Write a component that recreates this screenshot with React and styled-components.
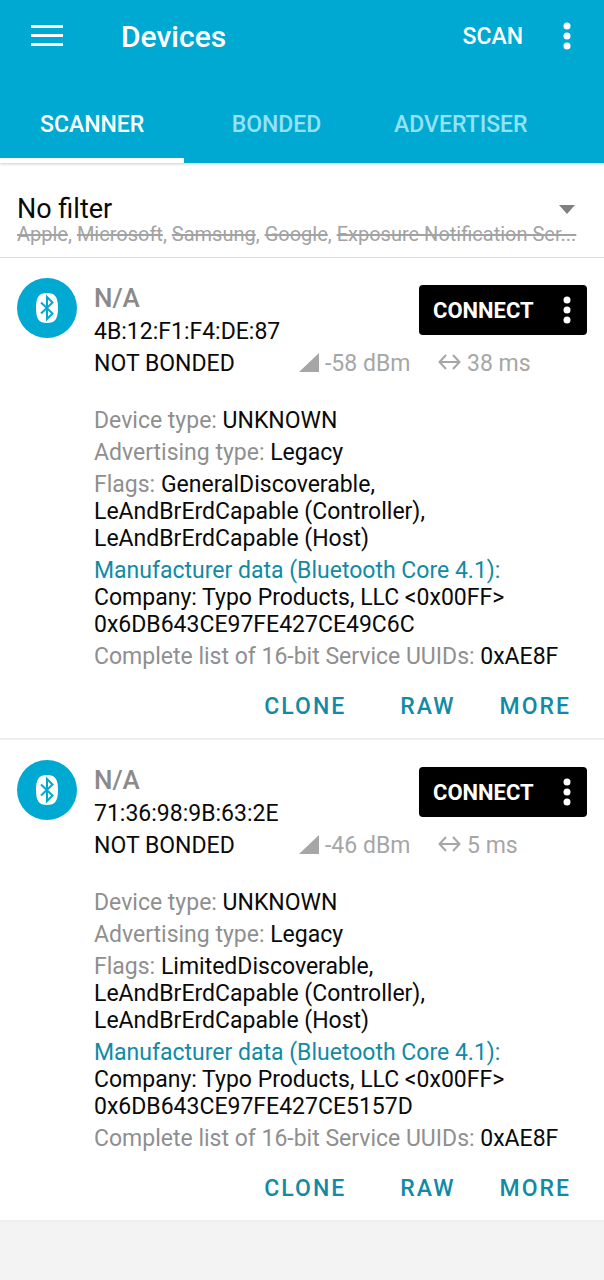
import React from "react";
import styled, { createGlobalStyle } from "styled-components";

const GlobalStyle = createGlobalStyle`
  *, *::before, *::after { box-sizing: border-box; }
  body {
    margin: 0;
    background: #f3f3f3;
    color: #0a0a0a;
    font-family: Roboto, "Noto Sans", sans-serif;
    font-size: 23px;
    line-height: 27px;
  }
  button {
    font: inherit;
    color: inherit;
    background: none;
    border: 0;
    padding: 0;
    cursor: pointer;
  }
  svg { display: block; flex: none; }
`;

const Header = styled.header`
  position: relative;
  background: #00a9d1;
  color: #fff;
  box-shadow: 0 1px 3px rgba(0, 0, 0, 0.2);
`;

const Toolbar = styled.div`
  display: flex;
  align-items: center;
  height: 72px;
  padding: 0 33px 0 31px;
`;

const Title = styled.h1`
  flex: 1;
  margin: 0 0 0 58px;
  padding-top: 2px;
  font-size: 30px;
  line-height: 36px;
  font-weight: 500;
`;

const ScanButton = styled.button`
  margin-right: 40px;
  font-weight: 500;
`;

const Tabs = styled.nav`
  display: flex;
  margin-top: 12px;
  padding-right: 51px;
`;

const Tab = styled.button`
  flex: 1 1 0;
  height: 79px;
  padding-top: 6px;
  font-weight: 500;
  color: ${(p) => (p.$active ? "#fff" : "#93e2f6")};
  border-bottom: 5px solid ${(p) => (p.$active ? "#fff" : "transparent")};
`;

const Filter = styled.button`
  display: block;
  width: 100%;
  padding: 32px 17px 12px;
  text-align: left;
  background: #fff;
  border-bottom: 1px solid #dedede;
`;

const FilterTop = styled.span`
  display: flex;
  align-items: center;
  justify-content: space-between;
  padding-right: 11px;
  font-size: 27px;
  line-height: 28px;
`;

const Excluded = styled.span`
  display: block;
  overflow: hidden;
  white-space: nowrap;
  font-size: 20px;
  line-height: 22px;
  color: #a3a3a3;
`;

const Card = styled.article`
  display: flex;
  align-items: flex-start;
  gap: 17px;
  padding: 20px 17px 15px;
  background: #fff;
  border-bottom: 2px solid #efefef;
`;

const Avatar = styled.div`
  display: flex;
  align-items: center;
  justify-content: center;
  flex: none;
  width: 60px;
  height: 60px;
  border-radius: 50%;
  background: #00a9d1;
`;

const Body = styled.div`
  flex: 1;
  min-width: 0;
`;

const Head = styled.div`
  display: flex;
  justify-content: space-between;
  align-items: flex-start;
  padding-top: 5px;
`;

const Name = styled.h2`
  margin: 0 0 5px;
  font-size: 26px;
  line-height: 30px;
  font-weight: 500;
  color: #8a8a8a;
`;

const Connect = styled.div`
  display: flex;
  align-items: center;
  justify-content: space-between;
  width: 168px;
  height: 50px;
  margin-top: 2px;
  padding: 0 16px 0 14px;
  border-radius: 4px;
  background: #000;
  color: #fff;
`;

const ConnectButton = styled.button`
  font-size: 22px;
  font-weight: 700;
`;

const Meta = styled.div`
  display: grid;
  grid-template-columns: 205px 139px 1fr;
  align-items: center;
  margin-top: 5px;
`;

const Stat = styled.span`
  display: flex;
  align-items: center;
  gap: 6px;
  color: #a6a6a6;

  svg {
    margin-bottom: 3px;
  }
`;

const Details = styled.div`
  display: flex;
  flex-direction: column;
  gap: 5px;
  margin-top: 30px;
`;

const Field = styled.p`
  margin: 0;
`;

const Label = styled.span`
  color: ${(p) => (p.$accent ? "#128aa6" : "#8f8f8f")};
`;

const Actions = styled.div`
  display: flex;
  justify-content: flex-end;
  gap: 14px;
  margin-top: 19px;
`;

const Action = styled.button`
  height: 34px;
  padding: 0 16px 0 14px;
  margin-right: ${(p) => (p.$spaced ? "10px" : "0")};
  font-weight: 500;
  letter-spacing: 2px;
  color: #128aa6;
`;

const MenuIcon = () => (
  <svg width="32" height="22" viewBox="0 0 32 22" fill="currentColor" aria-hidden="true">
    <path d="M0 0h32v3H0zM0 9h32v3H0zM0 18h32v3H0z" />
  </svg>
);

const DotsIcon = () => (
  <svg width="8" height="28" viewBox="0 0 8 28" fill="currentColor" aria-hidden="true">
    <circle cx="4" cy="4" r="3.5" />
    <circle cx="4" cy="14" r="3.5" />
    <circle cx="4" cy="24" r="3.5" />
  </svg>
);

const CaretIcon = () => (
  <svg width="18" height="10" viewBox="0 0 18 10" fill="#808080" aria-hidden="true">
    <path d="M1 1h16l-8 9z" />
  </svg>
);

const BluetoothIcon = () => (
  <svg width="22" height="30" viewBox="0 0 22 30" aria-hidden="true">
    <path fill="#fff" d="M11 0C19 0 22 4 22 15S19 30 11 30 0 26 0 15 3 0 11 0z" />
    <path
      d="M5 9.500l11.500 11L11 26V4l5.500 5.500L5 20.500"
      fill="none"
      stroke="#00a9d1"
      strokeWidth="2"
    />
  </svg>
);

const SignalIcon = () => (
  <svg width="20" height="19" viewBox="0 0 20 19" fill="#a6a6a6" aria-hidden="true">
    <path d="M20 0v19H0z" />
  </svg>
);

const IntervalIcon = () => (
  <svg width="23" height="16" viewBox="0 0 23 16" fill="none" stroke="#a6a6a6" strokeWidth="2" aria-hidden="true">
    <path d="M2 8h19M8 1L1.500 8 8 15M15 1l6.500 7L15 15" />
  </svg>
);

const excluded = ["Apple", "Microsoft", "Samsung", "Google", "Exposure Notification Ser..."];

const devices = [
  {
    address: "4B:12:F1:F4:DE:87",
    rssi: "-58 dBm",
    interval: "38 ms",
    discoverable: "GeneralDiscoverable",
    data: "0x6DB643CE97FE427CE49C6C",
  },
  {
    address: "71:36:98:9B:63:2E",
    rssi: "-46 dBm",
    interval: "5 ms",
    discoverable: "LimitedDiscoverable",
    data: "0x6DB643CE97FE427CE5157D",
  },
];

function DeviceCard({ device }) {
  return (
    <Card>
      <Avatar>
        <BluetoothIcon />
      </Avatar>
      <Body>
        <Head>
          <div>
            <Name>N/A</Name>
            <div>{device.address}</div>
          </div>
          <Connect>
            <ConnectButton>CONNECT</ConnectButton>
            <button aria-label="Connection options">
              <DotsIcon />
            </button>
          </Connect>
        </Head>
        <Meta>
          <span>NOT BONDED</span>
          <Stat>
            <SignalIcon />
            {device.rssi}
          </Stat>
          <Stat>
            <IntervalIcon />
            {device.interval}
          </Stat>
        </Meta>
        <Details>
          <Field>
            <Label>Device type:</Label> UNKNOWN
          </Field>
          <Field>
            <Label>Advertising type:</Label> Legacy
          </Field>
          <Field>
            <Label>Flags:</Label> {device.discoverable},
            <br />
            LeAndBrErdCapable (Controller),
            <br />
            LeAndBrErdCapable (Host)
          </Field>
          <Field>
            <Label $accent>Manufacturer data (Bluetooth Core 4.1):</Label>
            <br />
            Company: Typo Products, LLC &lt;0x00FF&gt;
            <br />
            {device.data}
          </Field>
          <Field>
            <Label>Complete list of 16-bit Service UUIDs:</Label> 0xAE8F
          </Field>
        </Details>
        <Actions>
          <Action $spaced>CLONE</Action>
          <Action>RAW</Action>
          <Action>MORE</Action>
        </Actions>
      </Body>
    </Card>
  );
}

export default function App() {
  return (
    <>
      <GlobalStyle />
      <Header>
        <Toolbar>
          <button aria-label="Open menu">
            <MenuIcon />
          </button>
          <Title>Devices</Title>
          <ScanButton>SCAN</ScanButton>
          <button aria-label="More options">
            <DotsIcon />
          </button>
        </Toolbar>
        <Tabs>
          <Tab $active>SCANNER</Tab>
          <Tab>BONDED</Tab>
          <Tab>ADVERTISER</Tab>
        </Tabs>
      </Header>
      <main>
        <Filter>
          <FilterTop>
            No filter
            <CaretIcon />
          </FilterTop>
          <Excluded>
            {excluded.map((name, i) => (
              <React.Fragment key={name}>
                {i > 0 && ", "}
                <s>{name}</s>
              </React.Fragment>
            ))}
          </Excluded>
        </Filter>
        {devices.map((device) => (
          <DeviceCard key={device.address} device={device} />
        ))}
      </main>
    </>
  );
}
